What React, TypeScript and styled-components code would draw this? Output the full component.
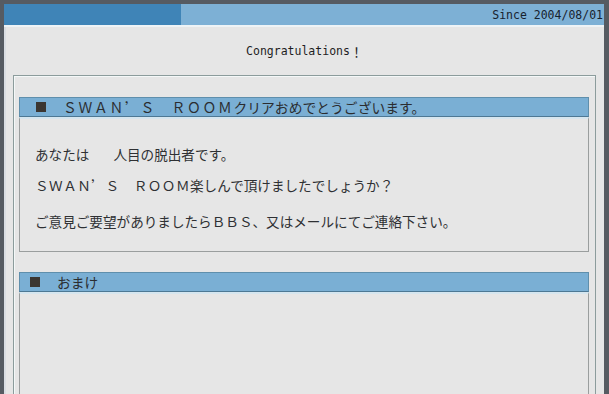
import React from "react";
import styled, {createGlobalStyle} from "styled-components";

const GlobalStyle = createGlobalStyle`
  html, body {
    margin: 0;
    padding: 0;
    background: #565b62;
  }
  body {
    font-family: "Noto Sans CJK JP", "Noto Sans", sans-serif;
    color: #2e3033;
  }
`;

const Frame = styled.div`
  padding: 4px 5px 0 4px;
  height: 390px;
  overflow: hidden;
`;

const HeaderBar = styled.div`
  display: flex;
  height: 21px;
  border-bottom: 2px solid #eef3f6;
`;

const HeaderDark = styled.div`
  width: 177px;
  background: #3f84b7;
`;

const HeaderLight = styled.div`
  flex: 1;
  background: #7db0d5;
  display: flex;
  align-items: center;
  justify-content: flex-end;
  padding-right: 1px;
  font-family: "DejaVu Sans Mono", monospace;
  font-size: 11.5px;
  color: #17222e;
`;

const Content = styled.div`
  background: #e6e6e6;
  border-left: 2px solid #d9dde2;
  padding: 0 8px 0 7px;
  height: 100%;
`;

const Title = styled.div`
  height: 48px;
  display: flex;
  align-items: center;
  justify-content: center;
  font-family: "DejaVu Sans Mono", "Noto Sans CJK JP", monospace;
  font-size: 11.5px;
  color: #1e1e1e;
  span {
    font-family: "Noto Sans CJK JP", sans-serif;
    font-size: 13px;
  }
`;

const Panel = styled.div`
  border: 1px solid #8c9c9c;
  box-shadow: inset 1px 1px 0 #f4f8f8;
  padding: 21px 6px 0 5px;
  display: flex;
  flex-direction: column;
  gap: 20px;
  height: 400px;
`;

const Section = styled.section``;

const SectionHead = styled.div<{ $indent: number }>`
  height: 18px;
  background: #7aafd4;
  border: 1px solid #5f8fac;
  border-bottom-color: #4d7894;
  display: flex;
  align-items: center;
  padding-left: ${props => props.$indent}px;
  font-size: 13.8px;
  line-height: 18px;
  color: #2b2d30;
  white-space: nowrap;
`;

const Square = styled.span`
  display: inline-block;
  width: 10px;
  height: 10px;
  background: #3b3631;
  margin-right: 17px;
`;

const Wide = styled.span<{ $spacing: number }>`
  letter-spacing: ${props => props.$spacing}px;
  font-variant-east-asian: full-width;
`;

const SectionBody = styled.div<{ $tall?: boolean }>`
  border: 1px solid #9a9e9e;
  border-top: 2px solid #d6e6ef;
  padding: 25px 15px 20px;
  min-height: ${props => (props.$tall ? "200px" : "auto")};
`;

const Line = styled.p<{ $after?: number }>`
  margin: 0 0 ${props => props.$after ?? 0}px;
  font-size: 13.6px;
  line-height: 20px;
  white-space: nowrap;
`;

const Blank = styled.span`
  display: inline-block;
  width: 24px;
`;

export default function App(): React.JSX.Element {
  return (
    <>
      <GlobalStyle/>
      <Frame>
        <HeaderBar>
          <HeaderDark/>
          <HeaderLight>Since 2004/08/01</HeaderLight>
        </HeaderBar>
        <Content>
          <Title>Congratulations<span>！</span></Title>
          <Panel>
            <Section>
              <SectionHead $indent={16}>
                <Square/><Wide $spacing={1.7}>ＳＷＡＮ’Ｓ　ＲＯＯＭ</Wide>クリアおめでとうございます。
              </SectionHead>
              <SectionBody>
                <Line $after={11}>あなたは<Blank/>人目の脱出者です。</Line>
                <Line $after={16}><Wide $spacing={0.5}>ＳＷＡＮ’Ｓ　ＲＯＯＭ</Wide>楽しんで頂けましたでしょうか？</Line>
                <Line>ご意見ご要望がありましたらＢＢＳ、又はメールにてご連絡下さい。</Line>
              </SectionBody>
            </Section>
            <Section>
              <SectionHead $indent={10}>
                <Square/>おまけ
              </SectionHead>
              <SectionBody $tall/>
            </Section>
          </Panel>
        </Content>
      </Frame>
    </>
  );
}
